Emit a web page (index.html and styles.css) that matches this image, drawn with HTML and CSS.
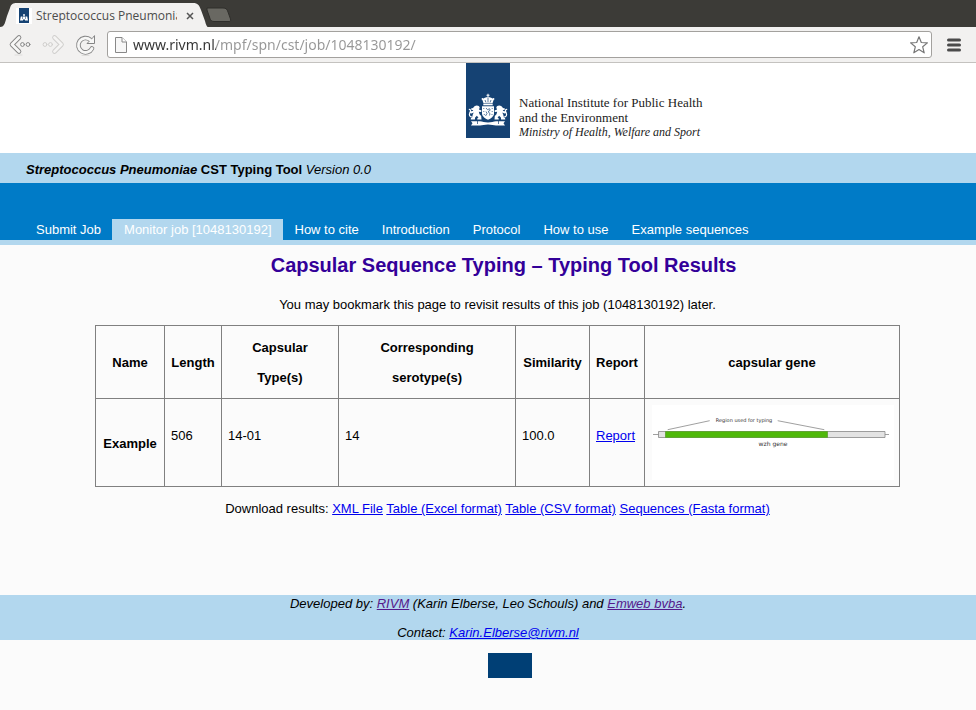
FILE: index.html
```html
<!DOCTYPE html>
<html lang="en">
<head>
<meta charset="utf-8">
<title>Streptococcus Pneumoniae CST Typing Tool</title>
<link rel="stylesheet" href="styles.css">
</head>
<body>
<svg class="defs" aria-hidden="true">
  <defs>
    <g id="lion">
      <path d="M8.500 43.200c2-1.400 5-.8 5.200 1.600l-.8 1.700 2.600 1-.3 1.400-2.400-.2.700 2.600 1.700 1.800.3 3.400h-4.300l.3-1.500 1-.3-1.600-2-1.800 1.700-.2 2.100H4.700l.3-1.500 1.200-.5.500-2.700 1-2.300-2.200 1-1.900-.7.200-1.400 2.800-.3.700-1-1.700 0-.6-1.500 2-.6z"/>
      <path d="M6.600 54C3.500 54.200 2.700 51.700 4 49.600 5.200 47.700 4.500 46.200 2.800 46.500" fill="none" stroke="#fff" stroke-width="1.200"/>
    </g>
  </defs>
</svg>

<header class="browser">
  <div class="tabstrip">
    <div class="tab">
      <svg class="tab-shape" viewBox="0 0 208 24" aria-hidden="true"><path d="M0 24C5 24 5 19 7 13L10 5C11 1 13 0 17 0H193C198 0 199 2 201 7L205 18C206 22 207 24 208 24Z" fill="#f2f1f0"/></svg>
      <div class="tab-content">
        <svg class="favicon" viewBox="0 0 16 16" aria-hidden="true"><path fill="#fff" d="M0 0h16v16H0z"/><path fill="#154273" d="M3 0h10v15H3z"/><path fill="#fff" d="M7.300 6h1.400v2H7.300zM6.500 8.500h3v3h-3zM4.800 8.500h1.200V11h1v1.500H4zM10 8.500h1.200l.8 4H9V11h1z"/></svg>
        <span class="tab-title">Streptococcus Pneumoniae</span>
        <button class="tab-close" aria-label="Close tab"><svg viewBox="0 0 8 8"><path d="M1 1l6 6M7 1L1 7" stroke="#555" stroke-width="1.500"/></svg></button>
      </div>
    </div>
    <button class="new-tab" aria-label="New tab"><svg viewBox="0 0 26 16"><path d="M1 1H17C20 1 21 2 22 5L24.500 12C25 14 24.500 14.500 23 14.500H8C6 14.500 4.500 13.500 4 11.500L1 3Z" fill="#696862" stroke="#2f2e2b"/></svg></button>
  </div>
  <div class="toolbar">
    <button class="tool" aria-label="Back"><svg viewBox="0 0 24 24" fill="none" stroke-linecap="round" stroke-linejoin="round"><path d="M11 4.500L4 11.500l7 7" stroke="#858585" stroke-width="4.600"/><path d="M11 4.500L4 11.500l7 7" stroke="#f7f7f6" stroke-width="2.800"/><circle cx="14.500" cy="11.500" r="1.900" fill="#f7f7f6" stroke="#858585"/><circle cx="20" cy="11.500" r="1.900" fill="#f7f7f6" stroke="#858585"/><path d="M7 22h7" stroke="#dddcda"/></svg></button>
    <button class="tool" aria-label="Forward"><svg viewBox="0 0 24 24" fill="none" stroke-linecap="round" stroke-linejoin="round"><path d="M13.500 4.500l7 7-7 7" stroke="#cfcecc" stroke-width="4.600"/><path d="M13.500 4.500l7 7-7 7" stroke="#f5f4f3" stroke-width="2.800"/><circle cx="4" cy="11.500" r="1.900" fill="#f5f4f3" stroke="#cfcecc"/><circle cx="9.500" cy="11.500" r="1.900" fill="#f5f4f3" stroke="#cfcecc"/></svg></button>
    <button class="tool" aria-label="Reload"><svg viewBox="0 0 24 24" fill="none" stroke-linecap="round" stroke-linejoin="round"><path d="M18 15.500A7.200 7.200 0 1 1 16 6.500" stroke="#858585" stroke-width="4.600"/><path d="M20.500 3V10.500H13L15.500 8l3-3z" fill="#f7f7f6" stroke="#858585"/><path d="M18 15.500A7.200 7.200 0 1 1 16.500 7" stroke="#f7f7f6" stroke-width="2.800"/><path d="M8 22.500h7" stroke="#dddcda"/></svg></button>
    <form class="omnibox">
      <svg class="page-icon" viewBox="0 0 14 18" aria-hidden="true"><path d="M1.500 1.500h6.500l4.500 4.500v10.500h-11z" fill="#f7f7f7" stroke="#888"/><path d="M8 1.500V6h4.500" fill="#fff" stroke="#888"/></svg>
      <input class="address" type="text" aria-label="Address" value="www.rivm.nl/mpf/spn/cst/job/1048130192/">
      <button class="star" type="button" aria-label="Bookmark this page"><svg viewBox="0 0 20 20"><path d="M10 1.800l2.300 5.700 6.100.4-4.700 3.900 1.500 6L10 14.500l-5.200 3.300 1.500-6L1.600 7.900l6.100-.4z" fill="#fff" stroke="#777" stroke-width="1.200" stroke-linejoin="round"/></svg></button>
    </form>
    <button class="menu" aria-label="Menu"><svg viewBox="0 0 14 14"><path d="M1.500 2h11M1.500 7h11M1.500 12h11" stroke="#4a4a4a" stroke-width="3" stroke-linecap="round"/></svg></button>
  </div>
</header>

<div class="brand">
  <svg class="arms" viewBox="0 0 44 75" role="img" aria-label="Coat of arms">
    <path fill="#154273" d="M0 0h44v75H0z"/>
    <g fill="#fff">
      <path d="M21.500 30.800h1v1h1v.9h-1V34h-1v-1.300h-1v-.9h1z"/>
      <path d="M17.500 40.200l-1.200-3.400c1.200-2 3.700-2.800 5.700-2.800s4.500.8 5.700 2.800l-1.200 3.400z"/>
      <path d="M17.300 40.700h9.400v1.600h-9.400z"/>
      <circle cx="16.500" cy="36" r=".9"/><circle cx="27.500" cy="36" r=".9"/>
      <path d="M16 43.300h12v7c0 3.200-3 5.200-6 6.500-3-1.300-6-3.300-6-6.500z"/>
      <use href="#lion"/>
      <use href="#lion" transform="matrix(-1 0 0 1 44 0)"/>
      <path d="M5 58.200h9c2.500 0 4.500 1.300 8 1.300s5.500-1.300 8-1.300h9l-1.500 2 1.500 2.300h-9c-2.500 0-4.500-1-8-1s-5.500 1-8 1H5L6.500 60.200z"/>
    </g>
    <g fill="none" stroke="#154273" stroke-width=".7">
      <path d="M22 34.500v5M19 37l1 2.500M25 37l-1 2.500"/>
      <path d="M20 45l1.500 1.700 2-1 .7 1.500-2.200 1.500 2 1.800-.5 2M20 48.500l1 2-1.500 2.500M17.300 45.500h1M17.300 48.500h1M25.700 45.500h1M25.700 48.500h1M17.800 51.500h1M25.500 51.500h1"/>
      <path d="M11.500 58v3M32.500 58v3"/>
    </g>
  </svg>
  <div class="brand-text">
    <span>National Institute for Public Health</span>
    <span>and the Environment</span>
    <em>Ministry of Health, Welfare and Sport</em>
  </div>
</div>

<div class="app-title"><b><i>Streptococcus Pneumoniae</i> CST Typing Tool</b> <i>Version 0.0</i></div>

<nav class="nav">
  <a href="#">Submit Job</a>
  <a href="#" class="current">Monitor job [1048130192]</a>
  <a href="#">How to cite</a>
  <a href="#">Introduction</a>
  <a href="#">Protocol</a>
  <a href="#">How to use</a>
  <a href="#">Example sequences</a>
</nav>

<main class="main">
  <h1>Capsular Sequence Typing – Typing Tool Results</h1>
  <p class="note">You may bookmark this page to revisit results of this job (1048130192) later.</p>
  <table class="results">
    <colgroup><col class="c-name"><col class="c-length"><col class="c-type"><col class="c-sero"><col class="c-sim"><col class="c-report"><col class="c-gene"></colgroup>
    <thead>
      <tr><th>Name</th><th>Length</th><th>Capsular<br>Type(s)</th><th>Corresponding<br>serotype(s)</th><th>Similarity</th><th>Report</th><th>capsular gene</th></tr>
    </thead>
    <tbody>
      <tr>
        <th scope="row">Example</th><td>506</td><td>14-01</td><td>14</td><td>100.0</td><td><a href="#">Report</a></td>
        <td class="gene">
          <svg viewBox="0 0 242 75" role="img" aria-label="wzh gene, region used for typing">
            <path fill="#fff" d="M0 0h242v75H0z"/>
            <path d="M1 29.500h236M15.700 24.700l42-9M125.700 15.700l46.600 9" stroke="#888" stroke-width=".8" fill="none"/>
            <path d="M6.500 26.500h226.500v6H6.500z" fill="#e3e3e3" stroke="#888" stroke-width=".8"/>
            <path d="M13.500 26.500H175.500v6H13.500z" fill="#4fb80a" stroke="#5d9e30" stroke-width=".8"/>
            <text class="gene-region" x="92" y="17">Region used for typing</text>
            <text class="gene-name" x="121" y="41">wzh gene</text>
          </svg>
        </td>
      </tr>
    </tbody>
  </table>
  <p class="downloads">Download results: <a href="#">XML File</a> <a href="#">Table (Excel format)</a> <a href="#">Table (CSV format)</a> <a href="#">Sequences (Fasta format)</a></p>
</main>

<footer class="footer">
  <p>Developed by: <a class="visited" href="#">RIVM</a> (Karin Elberse, Leo Schouls) and <a class="visited" href="#">Emweb bvba</a>.</p>
  <p>Contact: <a href="#">Karin.Elberse@rivm.nl</a></p>
</footer>
<div class="end-mark"></div>
</body>
</html>
```
FILE: styles.css
```css
* { box-sizing: border-box; }

body {
  margin: 0;
  background: #fbfbfb;
  color: #000;
  font: 13px/15px "Liberation Sans", Arial, sans-serif;
}

svg { display: block; }
.defs { position: absolute; width: 0; height: 0; }
p, h1 { margin: 0; }
a { color: #0000ee; }
a.visited { color: #551a8b; }

button {
  display: block;
  padding: 0;
  border: 0;
  background: none;
}

/* Browser window */
.browser { background: #f2f1f0; border-bottom: 1px solid #c4c2bf; }
.tabstrip { display: flex; align-items: flex-start; height: 27px; padding-top: 3px; background: #3c3b37; }
.tab { position: relative; width: 208px; height: 24px; }
.tab-shape { position: absolute; inset: 0; width: 100%; height: 100%; }
.tab-content {
  position: relative;
  display: flex;
  align-items: center;
  height: 24px;
  padding: 1px 14px 0 16px;
}
.favicon { flex: none; width: 16px; height: 16px; }
.tab-title {
  width: 141px;
  margin: 0 9px 0 4px;
  overflow: hidden;
  white-space: nowrap;
  color: #4c4c4c;
  font: 12px/16px "Open Sans", "Noto Sans", sans-serif;
}
.tab-close svg { width: 8px; height: 8px; }
.new-tab { margin: 4px 0 0 -2px; }
.new-tab svg { width: 26px; height: 16px; }

.toolbar { display: flex; align-items: center; height: 35px; padding: 0 15px 0 8px; }
.tool { width: 24px; margin-right: 9px; }
.tool svg { width: 24px; height: 24px; }
.omnibox {
  display: flex;
  flex: 1;
  align-items: center;
  height: 27px;
  padding: 0 2px 0 6px;
  border: 1px solid #a3a19e;
  border-radius: 3px;
  background: #fff;
}
.page-icon { width: 14px; height: 18px; }
.address {
  flex: 1;
  min-width: 0;
  height: 22px;
  margin-left: 5px;
  padding: 0;
  border: 0;
  outline: 0;
  background: linear-gradient(90deg, #333 83px, #969696 83px) text;
  color: transparent;
  font: 14px/20px "Noto Sans", "Open Sans", sans-serif;
}
.star svg { width: 20px; height: 20px; }
.menu { margin-left: 15px; }
.menu svg { width: 14px; height: 14px; }

/* Institute logo */
.brand {
  display: grid;
  grid-template-columns: 1fr 44px 1fr;
  height: 90px;
  background: #fff;
}
.arms { grid-column: 2; width: 44px; height: 75px; }
.brand-text {
  display: flex;
  flex-direction: column;
  padding: 32px 0 0 9px;
  color: #222;
  font: 13px/15px "Liberation Serif", serif;
}
.brand-text em { font-size: 12px; }

.app-title { padding: 9px 26px 6px; background: #b2d7ee; }

.nav {
  display: flex;
  padding: 36px 24px 0;
  border-bottom: 5px solid #b2d7ee;
  background: #007bc7;
}
.nav a {
  padding: 3px 11px 3px 12px;
  color: #fff;
  text-decoration: none;
}
.nav .current { background: #b2d7ee; }

/* Results */
.main { padding: 8px 0 0 19px; text-align: center; }
h1 { padding-left: 12px; color: #330099; font-size: 20px; line-height: 24px; }
.note { margin: 20px 0 13px; }
.results {
  width: 805px;
  margin: 0 auto;
  border-collapse: collapse;
  table-layout: fixed;
  line-height: 30px;
}
.results th, .results td { padding: 7px 0 5px; border: 1px solid #808080; }
.results td { padding: 6px 6px 20px; text-align: left; }
.results .gene { padding: 6px 5px 6px 7px; }
.gene svg { width: 100%; }
.gene-region { font: 5px "DejaVu Sans", sans-serif; text-anchor: middle; fill: #333; }
.gene-name { font: 6px "DejaVu Sans", sans-serif; text-anchor: middle; fill: #333; }
.c-name { width: 69px; }
.c-length { width: 57px; }
.c-type { width: 117px; }
.c-sero { width: 177px; }
.c-sim { width: 74px; }
.c-report { width: 55px; }
.downloads { margin: 14px 0 79px; }

.footer {
  display: grid;
  gap: 14px;
  padding-top: 1px;
  background: #b2d7ee;
  font-style: italic;
  text-align: center;
}
.end-mark { width: 44px; height: 25px; margin: 13px 0 32px 50%; background: #003f75; }
```
